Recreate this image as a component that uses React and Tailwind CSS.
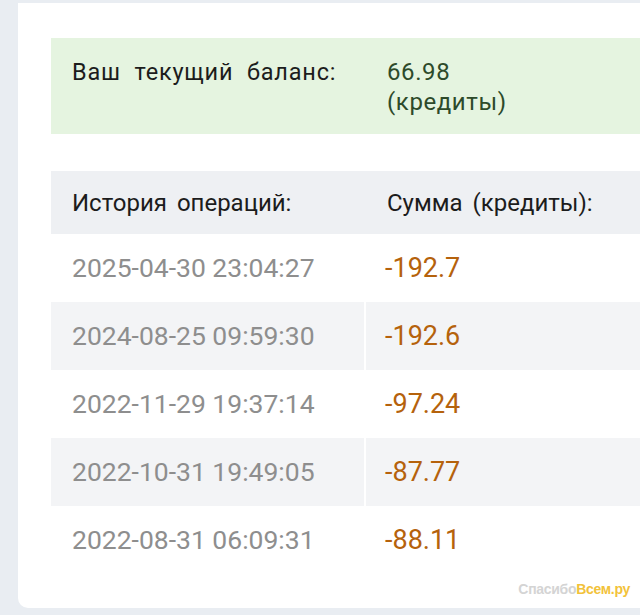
const rows = [
  { date: "2025-04-30 23:04:27", sum: "-192.7" },
  { date: "2024-08-25 09:59:30", sum: "-192.6" },
  { date: "2022-11-29 19:37:14", sum: "-97.24" },
  { date: "2022-10-31 19:49:05", sum: "-87.77" },
  { date: "2022-08-31 06:09:31", sum: "-88.11" },
];

export default function App() {
  return (
    <div className="w-[640px] h-[615px] overflow-hidden bg-[#e9edf2] pt-[3px] pl-[18px] font-['Roboto',sans-serif]">
      <div className="relative h-[605px] bg-white rounded-bl-[10px] pt-[35px] pl-[33px]">
        <div className="flex h-[96px] bg-[#e5f4e0] pt-[19px] leading-[30px]">
          <div className="w-[315px] pl-[21px] text-[23.5px] text-[#1c1c1c] tracking-[0.8px] [word-spacing:7px]">
            Ваш текущий баланс:
          </div>
          <div className="pl-[21px] text-[24px] tracking-[0.6px] text-[#2d4a2a]">
            66.98
            <br />
            (кредиты)
          </div>
        </div>

        <div className="mt-[37px] flex h-[63px] items-center bg-[#eef0f3] text-[24px] text-[#1c1c1c] [word-spacing:4px]">
          <div className="w-[315px] pl-[21px]">История операций:</div>
          <div className="pl-[21px]">Сумма (кредиты):</div>
        </div>

        {rows.map((r, i) => (
          <div
            key={r.date}
            className={
              i % 2 === 1
                ? "flex h-[68px] items-center bg-[#f3f4f6]"
                : "flex h-[68px] items-center bg-white"
            }
          >
            <div className="w-[315px] h-full flex items-center pl-[21px] text-[26.5px] text-[#8e8e8e] border-r-2 border-white">
              {r.date}
            </div>
            <div className="pl-[19px] text-[27px] text-[#b5620c]">{r.sum}</div>
          </div>
        ))}

        <div className="absolute right-[10px] bottom-[8px] text-[14px] font-bold font-['Liberation_Sans',sans-serif] tracking-[-0.3px]">
          <span className="text-[#d4d4d4]">Спасибо</span>
          <span className="text-[#f2c23a]">Всем.ру</span>
        </div>
      </div>
    </div>
  );
}
